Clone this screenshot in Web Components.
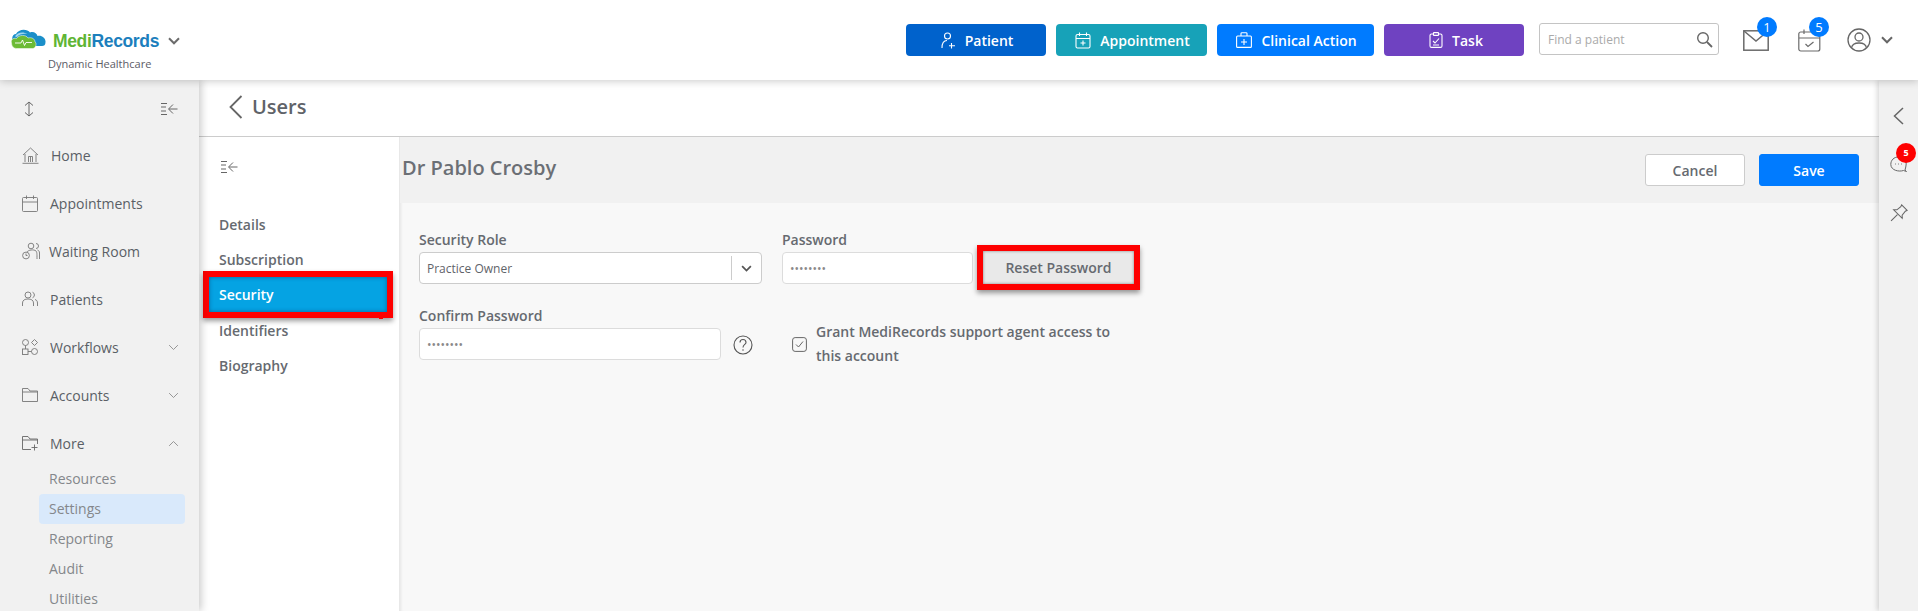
<!DOCTYPE html>
<html lang="en">
<head>
<meta charset="utf-8">
<title>MediRecords</title>
<style>
html,body{margin:0;height:611px;overflow:hidden;background:#fff;font-family:"Open Sans",sans-serif;}
mr-app{display:block;height:611px;}
</style>
</head>
<body>
<mr-app></mr-app>
<script>
const I = {
 logo:`<svg width="37" height="20" viewBox="0 0 37 20"><path d="M3 13C1 9 3 5 6 5C8 0 17 -1 20 3.500C23 2 27 4 27.500 7C31 5.500 36 9 35.500 13C35.500 16 34 17 32 17H8Z" fill="#1b8fc9"/><path d="M5 7.500C7 3 14 2.500 17 5C14 4.500 9 5 7 8Z" fill="#9fd6ee"/><path d="M1.500 14C.5 11 3 8.500 6.500 9.500C9 5.500 16 5.500 18 9C22 8 25 10 25 13C27 14 26 19.500 22.500 19.500H6.500C3.500 19.500 1.500 17 1.500 14Z" fill="#6cbb35" stroke="#fff" stroke-width=".5"/><path d="M5 14H11L12.5 11L14.5 16.500L16 13.500H22" fill="none" stroke="#fff" stroke-width=".9"/></svg>`,
 chev:`<svg width="12" height="8" viewBox="0 0 12 8"><path d="M1 1.300L6 6.300L11 1.300" fill="none" stroke="currentColor" stroke-width="2"/></svg>`,
 patient:`<svg width="15" height="17" viewBox="0 0 15 17" fill="none" stroke="#fff" stroke-width="1.100"><circle cx="6.500" cy="4" r="3"/><path d="M1 16C1 11 3 8.500 6 8.500M10.500 11V16.500M8 13.800H14"/></svg>`,
 appt:`<svg width="16" height="17" viewBox="0 0 16 17" fill="none" stroke="#fff" stroke-width="1.100"><rect x="1" y="2.500" width="14" height="13.500" rx="1.500"/><path d="M1 6.500H15M4.500 .5V4M11.500 .5V4M8 8.500V13.500M5.500 11H10.500"/></svg>`,
 clinical:`<svg width="16" height="16" viewBox="0 0 16 16" fill="none" stroke="#fff" stroke-width="1.100"><rect x=".6" y="4" width="14.800" height="11.400" rx="1"/><path d="M5 4V1.500Q5 .8 6 .8H10Q11 .8 11 1.500V4M8 7V13M5 10H11"/></svg>`,
 task:`<svg width="14" height="16" viewBox="0 0 14 16" fill="none" stroke="#fff" stroke-width="1.100"><rect x="1" y="2" width="12" height="13.400" rx="1.500"/><rect x="4.500" y=".6" width="5" height="2.800" rx=".5" fill="#6f42c1"/><path d="M4 9L6 11L10 6.500M4 13H10"/></svg>`,
 search:`<svg width="17" height="17" viewBox="0 0 17 17" fill="none" stroke="#666" stroke-width="1.400"><circle cx="7" cy="7" r="5.300"/><path d="M11 11L16 16" stroke-width="1.800"/></svg>`,
 mail:`<svg width="26" height="21" viewBox="0 0 26 21" fill="none" stroke="#6b6b6b" stroke-width="1.500"><rect x=".8" y=".8" width="24.400" height="19.400"/><path d="M1 1L13 11L25 1"/></svg>`,
 calcheck:`<svg width="23" height="23" viewBox="0 0 23 23" fill="none" stroke="#6b6b6b" stroke-width="1.200"><rect x=".8" y="3" width="21" height="19" rx="2"/><path d="M1 9H22M6 .5V5M17 .5V5M7.500 15L10 17.500L15.500 13"/></svg>`,
 user:`<svg width="24" height="24" viewBox="0 0 24 24" fill="none" stroke="#666" stroke-width="1.300"><circle cx="12" cy="12" r="11"/><circle cx="12" cy="9" r="4"/><path d="M4.500 20C5 16 8 15 12 15S19 16 19.500 20"/></svg>`,
 updown:`<svg width="10" height="16" viewBox="0 0 10 16" fill="none" stroke="#666"><path d="M5 1V15M1 4.500L5 1L9 4.500M1 11.500L5 15L9 11.500"/></svg>`,
 collapse:`<svg width="17" height="14" viewBox="0 0 17 14" fill="none" stroke="#666"><path d="M0 1.500H6M0 5H5M0 9H5M0 12.500H6M16.500 7H8M12 2.500L7.500 7L12 11.500"/></svg>`,
 home:`<svg width="17" height="17" viewBox="0 0 17 17" fill="none" stroke="#777" stroke-width=".9"><path d="M1 8L8.500 1L16 8M3 7V15M14 7V15M6.500 15V9.500H10.500V15M8.500 9.500V15M.5 16.300H16.500"/></svg>`,
 cal:`<svg width="16" height="17" viewBox="0 0 16 17" fill="none" stroke="#777" stroke-width=".9"><rect x=".5" y="2.500" width="15" height="14" rx="1"/><path d="M.5 7H15.500M4.500 .5V4M11.500 .5V4"/></svg>`,
 waiting:`<svg width="18" height="18" viewBox="0 0 18 18" fill="none" stroke="#777" stroke-width=".9"><circle cx="9" cy="4" r="2.800"/><path d="M14 1.500A2.500 2.500 0 0 1 14 6.500M5 10C6 8 12 7 14 9C15 10 15 12 15 17M17.500 17V11C17.500 9 16.500 8.500 15.500 8"/><circle cx="4" cy="13.500" r="3.400"/><path d="M4 11.500V13.500H5.500"/></svg>`,
 patients:`<svg width="16" height="16" viewBox="0 0 16 16" fill="none" stroke="#777" stroke-width=".9"><circle cx="6" cy="4" r="3"/><path d="M.5 15V12C.5 9 3 8 6 8S11.500 9 11.500 12V15M10.500 1.200A3 3 0 0 1 10.500 6.800M13 8.500C14.500 9 15.500 10 15.500 12V15"/></svg>`,
 workflows:`<svg width="16" height="16" viewBox="0 0 16 16" fill="none" stroke="#777" stroke-width=".9"><circle cx="3.500" cy="3.500" r="3"/><path d="M12.500 .5L15.500 3.500L12.500 6.500L9.500 3.500Z"/><rect x=".5" y="10" width="5.500" height="5.500"/><circle cx="12.500" cy="12.500" r="3"/><path d="M3.500 6.500V10M6 12.500H9.500"/></svg>`,
 folder:`<svg width="16" height="14" viewBox="0 0 16 14" fill="none" stroke="#777" stroke-width=".9"><path d="M.5 13.500V.5H6L8 3H15.500V13.500ZM.5 4H15.500"/></svg>`,
 folderplus:`<svg width="16" height="15" viewBox="0 0 16 15" fill="none" stroke="#666" stroke-width=".9"><path d="M9 13.500H.5V.5H6L8 3H15.500V8M.5 4H15.500M12.500 8.500V14.500M9.500 11.500H15.500"/></svg>`,
 back:`<svg width="14" height="24" viewBox="0 0 14 24" fill="none" stroke="#666" stroke-width="1.800"><path d="M12.500 1L1.500 12L12.500 23"/></svg>`,
 railback:`<svg width="11" height="18" viewBox="0 0 11 18" fill="none" stroke="#666" stroke-width="1.500"><path d="M10 1L1.500 9L10 17"/></svg>`,
 chat:`<svg width="17" height="16" viewBox="0 0 17 16" fill="none" stroke="#666"><path d="M15 14Q16 15 16.500 15.500L13.500 14.500C9 16 1 14.500 .8 8.500C.8 4 4 1 8.500 1S16.200 4 16.200 8C16.200 10 15.500 12 15 14Z"/><path d="M5 8H5.800M8 8H8.800M11 8H11.800"/></svg>`,
 pin:`<svg width="18" height="18" viewBox="0 0 17 17" fill="none" stroke="#666"><path d="M11 .8L16.200 6L14.500 6.800L11.500 10.500V13.500L3.500 5.500H6.500L10.200 2.500ZM7 10L1 16"/></svg>`,
 help:`<svg width="20" height="20" viewBox="0 0 20 20" fill="none" stroke="#555" stroke-width="1.100"><circle cx="10" cy="10" r="9"/><path d="M7 7.500C7 3.500 13 3.500 13 7.500C13 9.500 10 9.500 10 12.500M10 14.300V15.800"/></svg>`,
 tick:`<svg width="15" height="15" viewBox="0 0 15 15" fill="none" stroke="#666"><rect x=".6" y=".6" width="13.800" height="13.800" rx="2.500"/><path d="M4 7.500L6.500 10L11 4.500"/></svg>`
};
const make = (name, html, extra = {}) => {
  const tpl = document.createElement('template');
  tpl.innerHTML = html;
  customElements.define(name, class extends HTMLElement {
    connectedCallback(){
      if (this.shadowRoot) return;
      this.attachShadow({mode:'open'}).appendChild(tpl.content.cloneNode(true));
      if (extra.init) extra.init(this);
    }
  });
};

make('action-button',`<style>
:host{display:flex;align-items:center;justify-content:center;gap:9px;height:32px;box-sizing:border-box;padding-left:var(--pl,2px);border-radius:4px;color:#fff;font:600 14px "Open Sans",sans-serif;background:var(--bg);width:var(--w);}
span{display:flex}
</style><span id="i"></span><slot></slot>`,{init(e){e.shadowRoot.getElementById('i').innerHTML=I[e.getAttribute('icon')];}});

make('count-icon',`<style>
:host{display:block;position:relative;line-height:0;}
b{position:absolute;width:20px;height:20px;border-radius:50%;background:#007bff;color:#fff;font:400 13px/20px "Open Sans",sans-serif;text-align:center;top:var(--t);left:var(--l);}
</style><span id="i"></span><b><slot></slot></b>`,{init(e){e.shadowRoot.getElementById('i').innerHTML=I[e.getAttribute('icon')];}});

make('app-header',`<style>
:host{display:flex;align-items:center;height:80px;background:#fff;box-shadow:0 1px 8px rgba(0,0,0,.22);position:relative;z-index:5;color:#555;font-family:"Open Sans",sans-serif;}
.brand{width:906px;padding:30px 0 0 10px;box-sizing:border-box;flex:none;align-self:flex-start;}
.top{display:flex;align-items:center;height:22px;}
#logo{align-self:flex-start;margin-top:-1px;line-height:0;}
.name{font:bold 17.500px "Liberation Sans",sans-serif;letter-spacing:-.35px;margin-left:6px;color:#1c7fbd;}
.name i{font-style:normal;color:#5fb535;}
.top .c{display:flex;margin-left:9px;color:#6b6b6b;}
.sub{font-size:11px;line-height:15px;margin:3.500px 0 0 38px;color:#5c5c66;}
.actions{display:flex;gap:10px;}
.search{margin-left:15px;width:180px;height:32px;box-sizing:border-box;border:1px solid #c4c4c4;border-radius:3px;display:flex;align-items:center;justify-content:space-between;padding:0 5px 0 8px;color:#aaa;font-size:12px;margin-top:-2px;}
.search svg{display:block}
.tools{display:flex;align-items:center;margin-top:0;}
.mail{margin-left:24px;margin-top:1px}
.calc{margin-left:29px;}
.u{margin-left:26px;line-height:0;}
.c2{margin-left:10px;color:#666;display:flex;}
</style>
<div class="brand"><div class="top"><span id="logo"></span><span class="name"><i>Medi</i>Records</span><span class="c" id="c"></span></div><div class="sub">Dynamic Healthcare</div></div>
<div class="actions">
<action-button icon="patient" style="--bg:#0062cc;--w:140px">Patient</action-button>
<action-button icon="appt" style="--bg:#17a2b8;--w:151px">Appointment</action-button>
<action-button icon="clinical" style="--bg:#007bff;--w:157px">Clinical Action</action-button>
<action-button icon="task" style="--bg:#6f42c1;--w:140px;--pl:4px">Task</action-button>
</div>
<div class="search"><span>Find a patient</span><span id="s"></span></div>
<div class="tools">
<count-icon class="mail" icon="mail" style="--t:-13px;--l:14px">1</count-icon>
<count-icon class="calc" icon="calcheck" style="--t:-12px;--l:11px">5</count-icon>
<span class="u" id="u"></span><span class="c2" id="c2"></span>
</div>`,{init(e){const r=e.shadowRoot;r.getElementById('logo').innerHTML=I.logo;r.getElementById('c').innerHTML=I.chev;r.getElementById('s').innerHTML=I.search;r.getElementById('u').innerHTML=I.user;r.getElementById('c2').innerHTML=I.chev;}});

make('nav-item',`<style>
:host{display:flex;align-items:center;height:48px;box-sizing:border-box;padding:0 20px 2px 22px;color:#5a5f66;font:500 14px "Open Sans",sans-serif;}
#i{width:var(--iw,28px);flex:none;display:flex;}
.t{flex:1}
#c{display:flex;color:#888}
#c svg{width:11px;height:7px}
#c path{stroke-width:1}
</style><span id="i"></span><span class="t"><slot></slot></span><span id="c"></span>`,{init(e){const r=e.shadowRoot;r.getElementById('i').innerHTML=I[e.getAttribute('icon')];const c=e.getAttribute('chevron');if(c){r.getElementById('c').innerHTML=I.chev;if(c==='up')r.getElementById('c').style.transform='rotate(180deg)';}}});

make('nav-sub',`<style>
:host{display:flex;align-items:center;height:30px;box-sizing:border-box;padding-bottom:2px;margin:0 14px 0 39px;padding-left:10px;border-radius:4px;color:#84878b;font:500 14px "Open Sans",sans-serif;}
:host([active]){background:#d9e9fb;}
</style><slot></slot>`);

make('side-nav',`<style>
:host{display:block;width:199px;flex:none;background:#f1f1f1;box-shadow:2px 0 8px rgba(0,0,0,.22);position:relative;z-index:3;height:531px;overflow:hidden;}
.tog{display:flex;justify-content:space-between;align-items:center;height:46px;padding:6px 21px 0 24px;}
.tog span{display:flex}
.subs{margin-top:-4px}
</style>
<div class="tog"><span id="a"></span><span id="b"></span></div>
<nav-item icon="home" style="--iw:29px">Home</nav-item>
<nav-item icon="cal">Appointments</nav-item>
<nav-item icon="waiting" style="--iw:27px">Waiting Room</nav-item>
<nav-item icon="patients">Patients</nav-item>
<nav-item icon="workflows" chevron="down">Workflows</nav-item>
<nav-item icon="folder" chevron="down">Accounts</nav-item>
<nav-item icon="folderplus" chevron="up">More</nav-item>
<div class="subs"><nav-sub>Resources</nav-sub><nav-sub active>Settings</nav-sub><nav-sub>Reporting</nav-sub><nav-sub>Audit</nav-sub><nav-sub>Utilities</nav-sub></div>`,{init(e){const r=e.shadowRoot;r.getElementById('a').innerHTML=I.updown;r.getElementById('b').innerHTML=I.collapse;}});

make('users-bar',`<style>
:host{display:flex;align-items:center;gap:9px;box-sizing:border-box;height:57px;background:#fff;border-bottom:1px solid #ccc;padding:0 0 3px 30px;color:#5f6369;font:600 20px "Open Sans",sans-serif;}
span{display:flex}
</style><span id="i"></span><slot></slot>`,{init(e){e.shadowRoot.getElementById('i').innerHTML=I.back;}});

make('sub-link',`<style>
:host{display:flex;align-items:center;height:35px;padding-left:10px;margin:0 12px 0 10px;color:#666a70;font:600 14px "Open Sans",sans-serif;}
:host([active]){background:#05a3e3;color:#fff;box-shadow:inset 0 0 4px rgba(0,60,110,.6),0 0 0 6px #fe0000,0 3px 5px 6px rgba(0,0,0,.4);position:relative;z-index:1;}
:host([active])::after{content:"";position:absolute;right:4px;bottom:-7px;width:4px;height:1px;background:#fe0000;}
</style><slot></slot>`);

make('sub-nav',`<style>
:host{display:block;width:201px;flex:none;background:#fff;box-sizing:border-box;border-right:1px solid #e8e8e8;}
.t{display:flex;height:70px;padding:20px 0 0 22px;box-sizing:border-box;}
</style><div class="t"><span id="i"></span></div>
<sub-link>Details</sub-link><sub-link>Subscription</sub-link><sub-link active>Security</sub-link><sub-link style="margin-top:1px">Identifiers</sub-link><sub-link>Biography</sub-link>`,{init(e){e.shadowRoot.getElementById('i').innerHTML=I.collapse;}});

make('plain-button',`<style>
:host{display:flex;align-items:center;justify-content:center;width:100px;height:32px;box-sizing:border-box;border-radius:3px;font:600 14px "Open Sans",sans-serif;border:1px solid #ccc;background:#fff;color:#666a70;}
:host([primary]){background:#007bff;border-color:#007bff;color:#fff;}
</style><slot></slot>`);

make('form-field',`<style>
:host{display:block;color:#666a70;font:600 14px "Open Sans",sans-serif;width:var(--w);}
.l{height:20px;line-height:20px;margin-bottom:2px;}
.b{display:flex;align-items:center;height:32px;box-sizing:border-box;background:#fff;border:1px solid #dcdcdc;border-radius:4px;padding-left:7px;font-size:var(--fs,11px);font-weight:var(--fw,400);color:var(--fc,#8a8a8a);}
:host([select]) .b{border-color:#ccc;color:#5f6369;font-size:12px;font-weight:500;padding-left:7px;}
.d{display:none;margin-left:auto;width:29px;height:24px;border-left:1px solid #ccc;align-items:center;justify-content:center;color:#555;}
:host([select]) .d{display:flex;}
.d svg{width:11px;height:7px}
</style><div class="l" id="l"></div><div class="b"><span><slot></slot></span><span class="d" id="d"></span></div>`,{init(e){const r=e.shadowRoot;r.getElementById('l').textContent=e.getAttribute('label');r.getElementById('d').innerHTML=I.chev;}});

make('security-panel',`<style>
:host{display:block;flex:1;min-width:0;background:#f8f8f8;box-shadow:inset 3px 0 3px -2px rgba(0,0,0,.08);font-family:"Open Sans",sans-serif;}
.head{display:flex;align-items:center;justify-content:space-between;height:66px;background:#f1f1f1;padding:0 20px 0 2px;color:#6b6f75;}
.head h1{margin:0 0 5px;font:600 20px "Open Sans",sans-serif;}
.btns{display:flex;gap:14px;}
.form{padding:27px 0 0 19px;display:flex;flex-direction:column;gap:22px;}
.r{display:flex;align-items:flex-start;}
.reset{display:flex;align-items:center;justify-content:center;width:151px;height:33px;margin:21px 0 0 10px;background:#e9e9e9;color:#666a70;font:600 14px "Open Sans",sans-serif;box-shadow:inset 0 0 3px rgba(0,0,0,.45),0 0 0 6px #fe0000,0 3px 5px 6px rgba(0,0,0,.4);}
.h{display:flex;margin:29px 0 0 12px;}
.g{display:flex;align-items:center;gap:9px;margin:14px 0 0 39px;width:340px;color:#666a70;font:600 14px/24px "Open Sans",sans-serif;}
.g span{display:flex;flex:none;}
.g div{width:310px}
</style>
<div class="head"><h1>Dr Pablo Crosby</h1><div class="btns"><plain-button>Cancel</plain-button><plain-button primary>Save</plain-button></div></div>
<div class="form">
<div class="r"><form-field select label="Security Role" style="--w:343px">Practice Owner</form-field>
<form-field label="Password" style="--w:191px;margin-left:20px;--fs:12px">••••••••</form-field>
<div class="reset">Reset Password</div></div>
<div class="r"><form-field label="Confirm Password" style="--w:302px;--fs:12px">••••••••</form-field><span class="h" id="h"></span>
<div class="g"><span id="t"></span><div>Grant MediRecords support agent access to this account</div></div></div>
</div>`,{init(e){const r=e.shadowRoot;r.getElementById('h').innerHTML=I.help;r.getElementById('t').innerHTML=I.tick;}});

make('right-rail',`<style>
:host{display:flex;flex-direction:column;align-items:center;width:39px;flex:none;background:#f1f1f1;box-shadow:-2px 0 5px rgba(0,0,0,.15);position:relative;z-index:2;padding-top:27px;box-sizing:border-box;}
span{display:flex}
.chat{position:relative;margin-top:31px;}
b{position:absolute;left:6px;top:-13px;width:20px;height:20px;border-radius:50%;background:#fe0000;color:#fff;font:700 9px/20px "Open Sans",sans-serif;text-align:center;}
.pin{margin-top:32px}
</style><span id="a"></span><span class="chat"><span id="b"></span><b>5</b></span><span class="pin" id="c"></span>`,{init(e){const r=e.shadowRoot;r.getElementById('a').innerHTML=I.railback;r.getElementById('b').innerHTML=I.chat;r.getElementById('c').innerHTML=I.pin;}});

make('mr-app',`<style>
:host{display:flex;flex-direction:column;height:611px;overflow:hidden;}
.main{display:flex;flex:1;min-height:0;}
.col{display:flex;flex-direction:column;flex:1;min-width:0;}
.body{display:flex;flex:1;min-height:0;}
</style>
<app-header></app-header>
<div class="main"><side-nav></side-nav>
<div class="col"><users-bar>Users</users-bar><div class="body"><sub-nav></sub-nav><security-panel></security-panel></div></div>
<right-rail></right-rail></div>`);
</script>
</body>
</html>
